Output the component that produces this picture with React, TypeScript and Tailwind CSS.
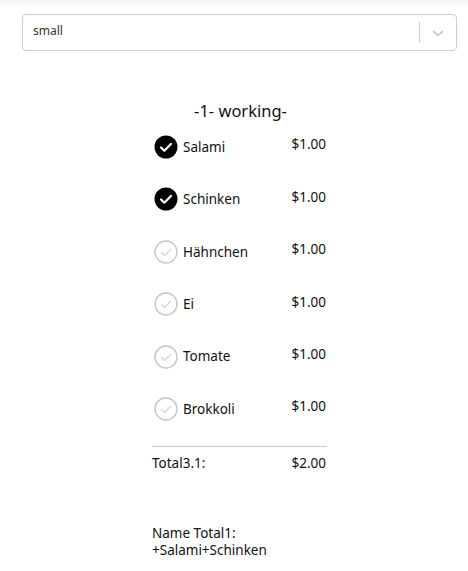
import React from "react";

const items = [
  { name: "Salami", checked: true },
  { name: "Schinken", checked: true },
  { name: "Hähnchen", checked: false },
  { name: "Ei", checked: false },
  { name: "Tomate", checked: false },
  { name: "Brokkoli", checked: false },
];

function Check({ checked }: { checked: boolean }) {
  if (checked) {
    return (
      <svg width="24" height="24" viewBox="0 0 24 24">
        <circle cx="12" cy="12" r="11.5" fill="#000" />
        <path d="M7 12.5l3.3 3.2L17 9" fill="none" stroke="#fff" strokeWidth="2.2" strokeLinecap="round" strokeLinejoin="round" />
      </svg>
    );
  }
  return (
    <svg width="24" height="24" viewBox="0 0 24 24">
      <circle cx="12" cy="12" r="11" fill="#fff" stroke="#c6c6c6" strokeWidth="1.4" />
      <path d="M7.5 12.5l3 3L16.5 9.5" fill="none" stroke="#d4d4d4" strokeWidth="1.3" strokeLinecap="round" strokeLinejoin="round" />
    </svg>
  );
}

export default function App() {
  return (
    <div className="min-h-[571px] w-[468px] bg-white text-[#111] relative" style={{ fontFamily: '"Noto Sans", "Open Sans", sans-serif' }}>
      <div className="h-[6px] bg-gradient-to-b from-[#f3f3f3] to-white" />
      <div className="pl-[22px] pr-[11px] pt-[8px]">
        <div className="h-[37px] border border-[#cccccc] rounded-[4px] flex items-center">
          <div className="flex-1 pl-[10px] pb-[4px] text-[12px] text-[#333]">small</div>
          <div className="w-px h-[21px] bg-[#cccccc]" />
          <div className="w-[36px] flex justify-center">
            <svg width="14" height="10" viewBox="0 0 14 10">
              <path d="M2 3l5 4.5L12 3" fill="none" stroke="#cccccc" strokeWidth="2" />
            </svg>
          </div>
        </div>
      </div>

      <div className="ml-[152px] w-[175px] mt-[49px]">
        <div className="text-center text-[16.5px] leading-[22px] text-[#111] pl-[2px]">-1- working-</div>
        <div className="mt-[13px] flex flex-col gap-[28.4px]">
          {items.map((it) => (
            <div key={it.name} className="flex items-center h-[24px]">
              <div className="ml-[2px]">
                <Check checked={it.checked} />
              </div>
              <div className="ml-[5px] text-[13.5px] flex-1">{it.name}</div>
              <div className="text-[13.5px] pb-[5px] pr-[1px]">$1.00</div>
            </div>
          ))}
        </div>
        <div className="mt-[25px] h-px bg-[#c8c8c8]" />
        <div className="mt-[6px] flex justify-between text-[13.5px] leading-[20px]">
          <span>Total3.1:</span>
          <span className="pr-[1px]">$2.00</span>
        </div>
        <div className="mt-[52px] text-[13.5px] leading-[17px]">
          <div>Name Total1:</div>
          <div>+Salami+Schinken</div>
        </div>
      </div>
    </div>
  );
}
